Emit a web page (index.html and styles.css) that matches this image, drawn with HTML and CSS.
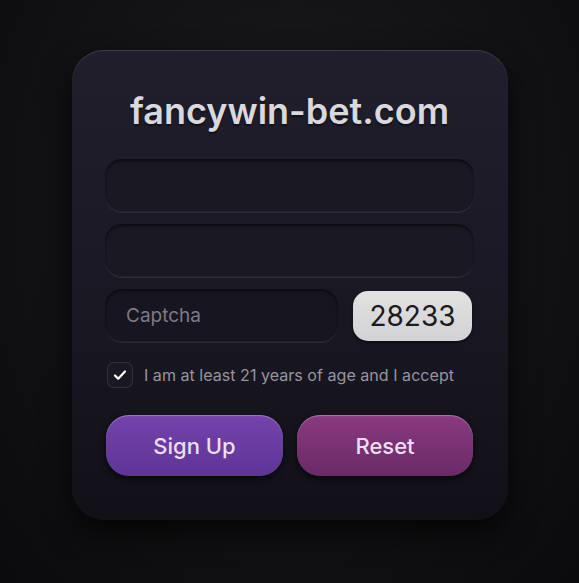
FILE: index.html
```html
<!DOCTYPE html>
<html lang="en">
<head>
  <meta charset="UTF-8">
  <meta name="viewport" content="width=device-width, initial-scale=1.0">
  <title>fancywin-bet.com</title>
  <link rel="stylesheet" href="styles.css">
</head>
<body>
  <div class="card">
    <h1 class="title">fancywin-bet.com</h1>

    <input class="field" type="text">
    <input class="field" type="password">

    <!-- Captcha row -->
    <div class="captcha-row">
      <input class="field captcha-input" type="text" placeholder="Captcha">
      <div class="captcha-code">28233</div>
    </div>

    <label class="agree">
      <span class="check">
        <svg width="16" height="16" viewBox="0 0 16 16"><path d="M3 8.5l3.2 3.2L13 4.5" fill="none" stroke="#fff" stroke-width="2.2" stroke-linecap="round" stroke-linejoin="round"/></svg>
      </span>
      <span>I am at least 21 years of age and I accept</span>
    </label>

    <div class="buttons">
      <button class="btn btn-signup">Sign Up</button>
      <button class="btn btn-reset">Reset</button>
    </div>
  </div>
</body>
</html>
```

FILE: styles.css
```css
body {
  margin: 0;
  padding: 50px 0 0 72px;
  width: 579px;
  height: 583px;
  box-sizing: border-box;
  overflow: hidden;
  font-family: Inter, "Noto Sans", sans-serif;
  background: radial-gradient(ellipse at 50% 35%, #1a191d 0%, #121114 55%, #0b0a0c 100%);
}
.card {
  width: 436px;
  height: 470px;
  box-sizing: border-box;
  padding: 33px 34px 0 33px;
  border-radius: 32px;
  background: linear-gradient(180deg, #221f2d 0%, #1b1925 45%, #121017 100%);
  box-shadow: inset 0 1px 0 rgba(255, 255, 255, 0.13), 0 14px 30px rgba(0, 0, 0, 0.7);
}
.title {
  margin: 0 0 20px;
  text-align: center;
  font-size: 36px;
  font-weight: 600;
  color: #d9d8dd;
  line-height: 56px;
  letter-spacing: 0;
  text-shadow: 0 2px 2px rgba(0, 0, 0, 0.5);
}
.field {
  display: block;
  width: 369px;
  height: 53px;
  box-sizing: border-box;
  margin: 0 0 12px;
  padding: 0 21px;
  border: none;
  border-radius: 17px;
  background: #1a1823;
  box-shadow: inset 0 2px 3px rgba(0, 0, 0, 0.55), 0 1px 0 rgba(255, 255, 255, 0.08), inset 0 -1px 0 rgba(255, 255, 255, 0.05);
  font-family: inherit;
  font-size: 19px;
  color: #d8d6de;
  outline: none;
}
.field::placeholder {
  color: #7d7b88;
}
.captcha-row {
  display: flex;
  align-items: center;
  gap: 15px;
  margin-top: 2px;
}
.captcha-input {
  width: 233px;
  margin: 0;
  background: #17151f;
}
.captcha-code {
  width: 119px;
  height: 50px;
  border-radius: 15px;
  background: linear-gradient(180deg, #e2e2e3, #d2d2d4);
  box-shadow: 0 2px 3px rgba(0, 0, 0, 0.5);
  display: flex;
  align-items: center;
  justify-content: center;
  font-size: 28px;
  color: #1b1a1e;
}
.agree {
  display: flex;
  align-items: center;
  gap: 11px;
  margin: 20px 0 0 2px;
  font-size: 16.1px;
  color: #96949f;
}
.check {
  width: 26px;
  height: 26px;
  box-sizing: border-box;
  border-radius: 7px;
  border: 1px solid rgba(255, 255, 255, 0.1);
  background: #1a1822;
  display: flex;
  align-items: center;
  justify-content: center;
}
.buttons {
  display: flex;
  gap: 14px;
  margin: 27px 0 0 1px;
}
.btn {
  height: 61px;
  border: none;
  border-radius: 23px;
  font-family: inherit;
  font-size: 22px;
  font-weight: 500;
  color: #ecdff3;
  cursor: pointer;
}
.btn-signup {
  width: 177px;
  background: linear-gradient(180deg, #7443ab 0%, #5e3597 100%);
  box-shadow: inset 0 1px 1px rgba(255, 255, 255, 0.3), 0 3px 6px rgba(0, 0, 0, 0.6);
}
.btn-reset {
  width: 176px;
  background: linear-gradient(180deg, #893a80 0%, #6a2a66 100%);
  box-shadow: inset 0 1px 1px rgba(255, 255, 255, 0.3), 0 3px 6px rgba(0, 0, 0, 0.6);
}
```
